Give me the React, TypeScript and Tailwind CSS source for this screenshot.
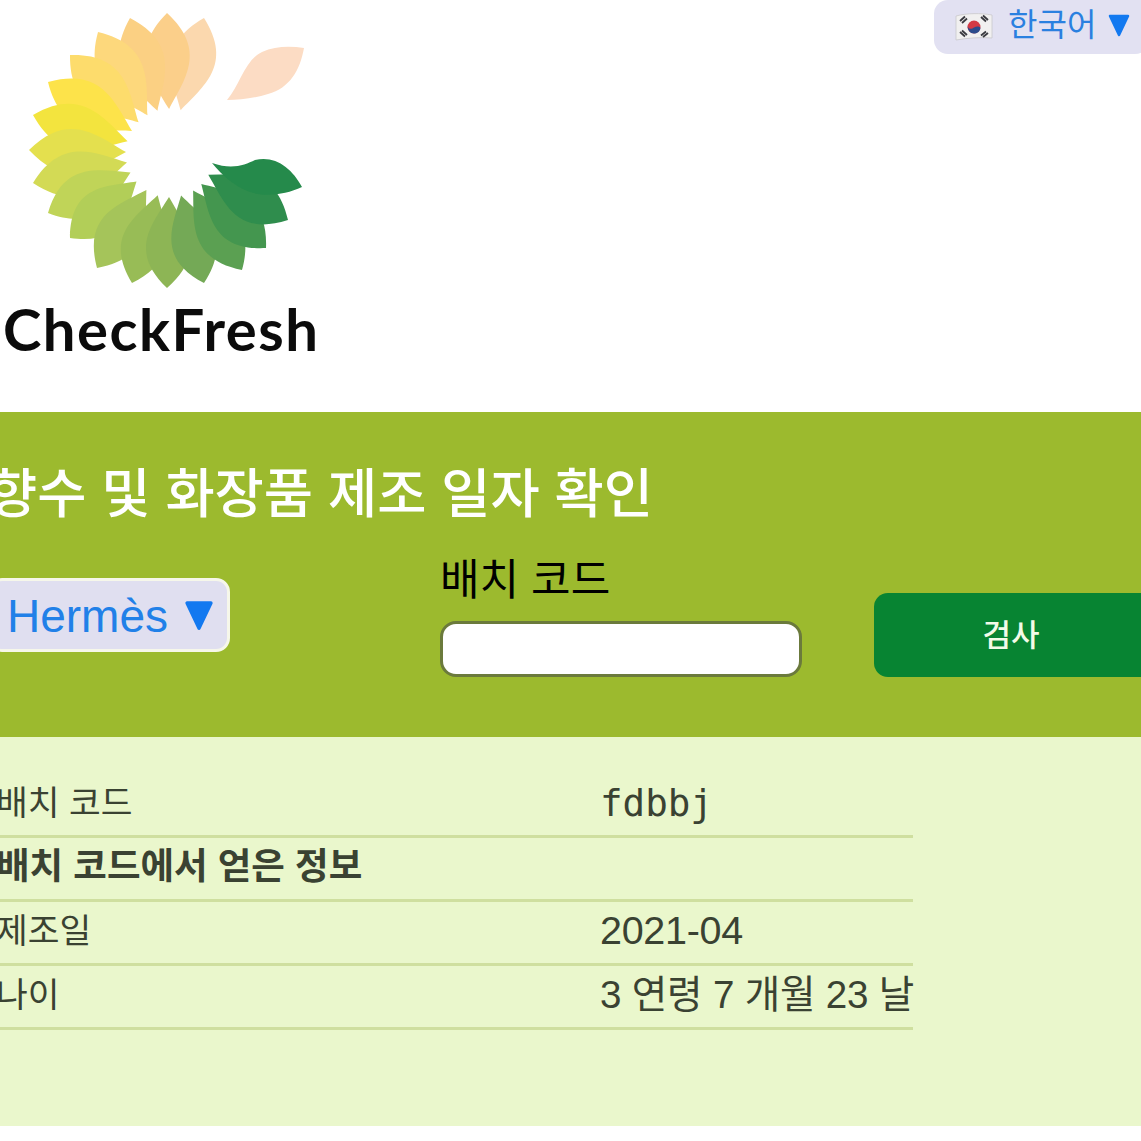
import React from 'react';

// ── Logo ─────────────────────────────────────────────────────────────────────

const CX = 170;
const CY = 153;

// tip x, tip y, colour: drawn from the peach end round to the dark green end
const PETALS: [number, number, string][] = [
    [204, 18, '#fbd8ae'],
    [167, 13, '#fbcf8a'],
    [130, 18, '#fbd083'],
    [98, 32, '#fdd87c'],
    [70, 55, '#fddc6c'],
    [48, 82, '#fde34a'],
    [33, 115, '#f3e43e'],
    [29, 150, '#e4e04e'],
    [33, 183, '#d3da55'],
    [48, 213, '#c0d458'],
    [70, 238, '#b2ce58'],
    [97, 268, '#a5c45a'],
    [132, 283, '#98bc56'],
    [167, 288, '#8db555'],
    [204, 283, '#74a956'],
    [242, 270, '#5ba052'],
    [266, 248, '#44964f'],
    [288, 220, '#2f8d4d'],
];

function petalPath(tx: number, ty: number) {
    const dx = tx - CX;
    const dy = ty - CY;
    const r = Math.hypot(dx, dy);
    const ux = dx / r;
    const uy = dy / r;
    const bx = CX + ux * 44;
    const by = CY + uy * 44;
    const len = r - 44;
    const pt = (along: number, side: number) =>
        `${(bx + ux * along - uy * side).toFixed(1)} ${(by + uy * along + ux * side).toFixed(1)}`;
    return `M${pt(0, 0)} C${pt(len * 0.3, 16)} ${pt(len * 0.6, 40)} ${tx} ${ty} C${pt(len * 0.6, -40)} ${pt(len * 0.3, -16)} ${pt(0, 0)}Z`;
}

function LogoMark() {
    return (
        <svg width="330" height="298" viewBox="0 0 330 298" className="block">
            {PETALS.map(([x, y, c]) => (
                <path key={`${x}-${y}`} d={petalPath(x, y)} fill={c} />
            ))}
            <path d="M212 163 C232 170 245 165 255 160 C275 155 292 168 302 187 C285 195 265 197 250 192 C235 187 222 175 212 163Z" fill="#258a4b" />
            <path d="M227 100 C240 85 245 60 262 52 C275 46 290 46 304 48 C300 70 290 88 268 94 C255 98 240 100 227 100Z" fill="#fcdcc4" />
        </svg>
    );
}

function KoreanFlag() {
    return (
        <svg width="38" height="30" viewBox="0 0 38 30" className="block">
            <path d="M1 4 C12 1 26 1 37 3 L37 26 C26 25 12 26 1 28Z" fill="#f1f0f0" stroke="#c9c8cc" strokeWidth="0.8" />
            <circle cx="19" cy="15" r="6.5" fill="#d23a45" />
            <path d="M12.6 14 C13.5 18 17 17 19 15.5 C21 14 25 14 25.4 16 C25 20 22 21.5 19 21.5 C15 21.5 12.5 18 12.6 14Z" fill="#2b4b8c" />
            <path d="M5 9 L10 4.5 M7 11 L12 6.5 M26 5 L31 9.5 M28 3.5 L33 8 M5 20 L10 24.5 M7 18.5 L12 23 M26 23.5 L31 19.5 M28 25 L33 21" stroke="#3a3a40" strokeWidth="1.8" />
        </svg>
    );
}

function Triangle({ size }: { size: number }) {
    return (
        <svg width={size} height={size} viewBox="0 0 24 24" className="block shrink-0">
            <path d="M3 3 H21 L12 22Z" fill="#1379f0" stroke="#1379f0" strokeWidth="2.5" strokeLinejoin="round" />
        </svg>
    );
}

// ── Result rows ──────────────────────────────────────────────────────────────

function ResultRow({ label, value, date, bold, mono }: { label: string; value?: string; date?: boolean; bold?: boolean; mono?: boolean }) {
    return (
        <div className="flex h-[64px] items-center border-b-[3px] border-[#cfdf9f] text-[#3a4232]">
            <span className={`-mt-[2px] w-[604px] shrink-0 whitespace-nowrap ${bold ? 'text-[36.5px] font-bold' : 'text-[34.5px]'}`}>{label}</span>
            {value && (
                <span className={`-mt-[3px] whitespace-nowrap ${mono ? "font-['DejaVu_Sans_Mono',monospace] text-[37.5px]" : date ? 'text-[39.5px] tracking-[-0.3px]' : 'text-[38.6px] tracking-[-0.2px]'}`}>
                    {value}
                </span>
            )}
        </div>
    );
}

// ── Page ─────────────────────────────────────────────────────────────────────

export default function App() {
    return (
        <div className="w-[1141px] h-[1141px] overflow-hidden bg-white font-['Liberation_Sans','Noto_Sans_CJK_KR',sans-serif]">
            <header className="flex h-[412px] justify-between items-start">
                <div>
                    <LogoMark />
                    <div className="ml-[3px] -mt-[2px] font-['Lato',sans-serif] font-bold text-[58px] leading-[66px] tracking-[1.5px] text-[#0b0b0b]">CheckFresh</div>
                </div>
                <div className="flex h-[54px] w-[215px] -mr-[8px] items-center gap-[15px] rounded-b-[14px] rounded-tl-[14px] bg-[#e2e1f2] pl-[21px]">
                    <KoreanFlag />
                    <span className="-mt-[4px] flex items-center gap-[11px] text-[32px] text-[#2a80e0]">
                        한국어
                        <Triangle size={24} />
                    </span>
                </div>
            </header>

            <section className="h-[325px] bg-[#9cba2e] pt-[48px]">
                <h1 className="-ml-[12px] whitespace-nowrap text-[53.5px] leading-[70px] font-medium text-white">향수 및 화장품 제조 일자 확인</h1>
                <div className="mt-[40px] flex items-start">
                    <div className="-ml-[12px] mt-[8px] flex h-[74px] w-[242px] shrink-0 items-center gap-[15px] rounded-[14px] border-[3px] border-[#f6f7ea] bg-[#e0dff0] pl-[16px]">
                        <span className="mt-[3px] text-[46px] text-[#2180e8]">Hermès</span>
                        <Triangle size={32} />
                    </div>
                    <div className="ml-[210px] w-[362px] shrink-0">
                        <label className="block -mt-[13px] text-[43px] leading-[46px] text-black">배치 코드</label>
                        <div className="mt-[18px] h-[56px] rounded-[16px] border-[3px] border-[#6b7a3c] bg-white" />
                    </div>
                    <button className="ml-[72px] mt-[23px] h-[84px] w-[290px] shrink-0 rounded-[14px] bg-[#078432] pr-[16px] pt-[2px] text-[31px] font-medium text-[#f2fbe8]">검사</button>
                </div>
            </section>

            <section className="h-[389px] bg-[#eaf7cc] pt-[37px]">
                <div className="-ml-[4px] w-[917px]">
                    <ResultRow label="배치 코드" value="fdbbj" mono />
                    <ResultRow label="배치 코드에서 얻은 정보" bold />
                    <ResultRow label="제조일" value="2021-04" date />
                    <ResultRow label="나이" value="3 연령 7 개월 23 날" />
                </div>
            </section>
        </div>
    );
}
